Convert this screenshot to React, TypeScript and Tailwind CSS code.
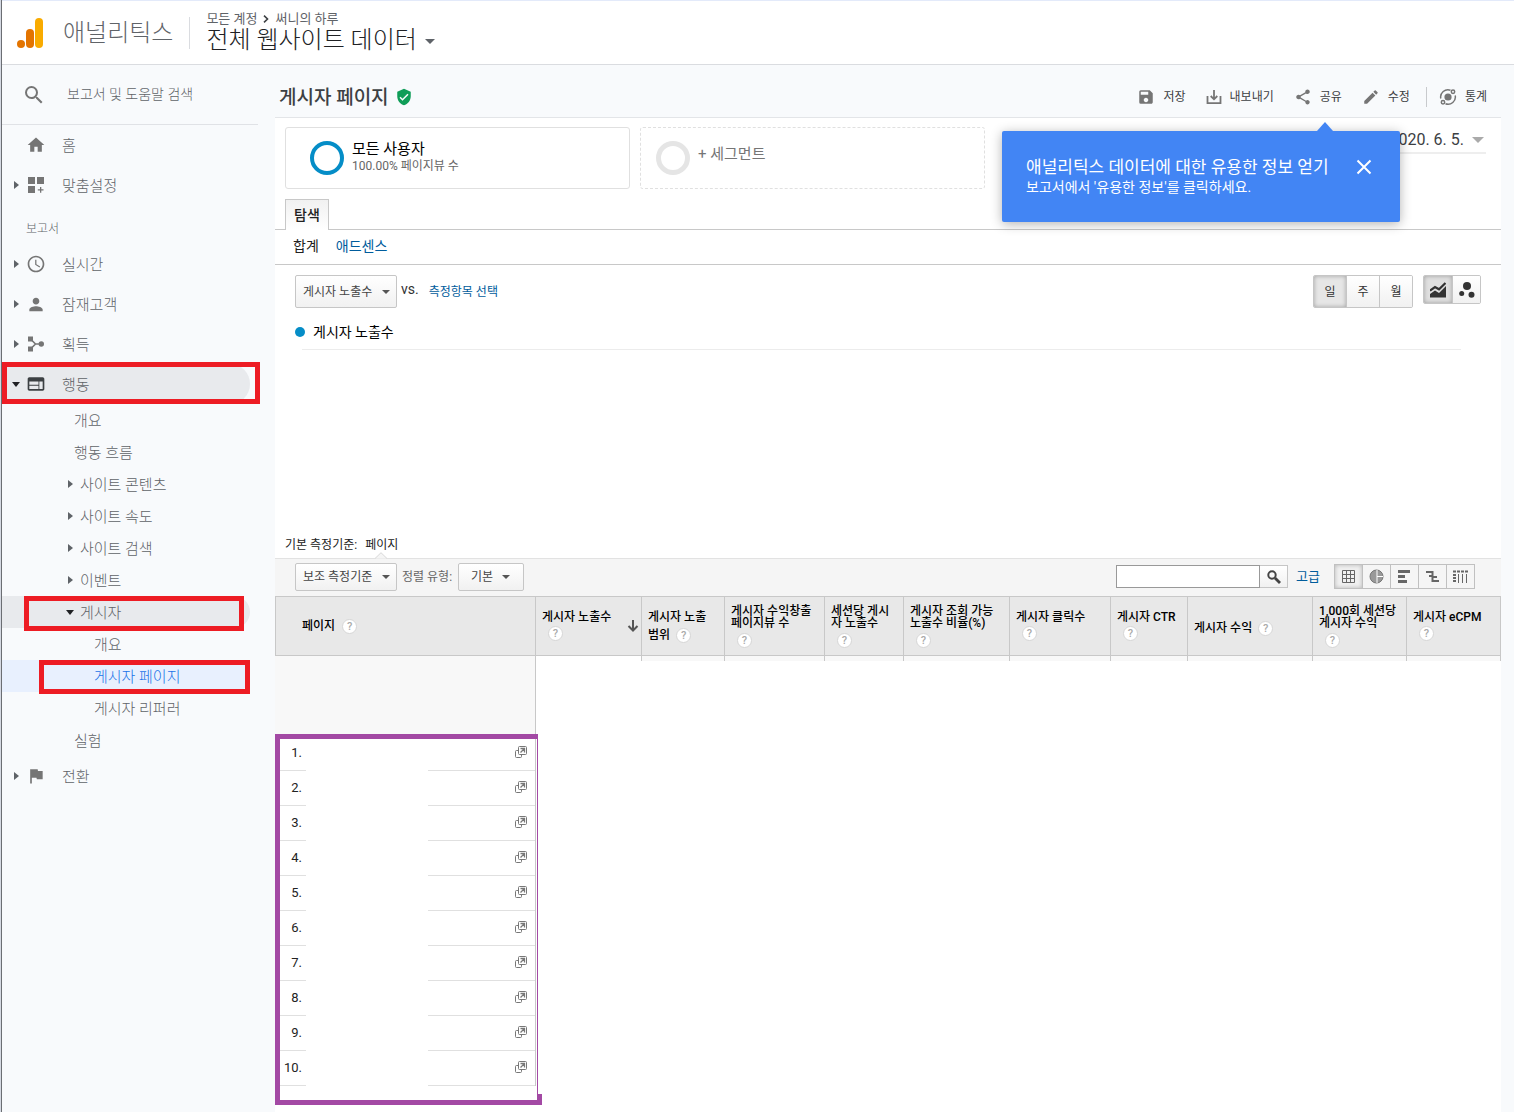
import type { ReactNode } from 'react'
import clsx from 'clsx'
import {
  MdAccessTime,
  MdEdit,
  MdFlag,
  MdHome,
  MdPerson,
  MdSave,
  MdSearch,
  MdShare,
  MdVerifiedUser,
  MdWeb
} from 'react-icons/md'

interface NavEntry {
  label: string
  icon?: ReactNode
  level: 0 | 1 | 2
  arrow?: 'right' | 'down'
  state?: 'open' | 'current'
  mark?: string
}

const TOP_NAV: NavEntry[] = [
  { label: '홈', icon: <MdHome size={20} />, level: 0 },
  { label: '맞춤설정', icon: <CustomIcon />, level: 0, arrow: 'right' }
]

const REPORT_NAV: NavEntry[] = [
  { label: '실시간', icon: <MdAccessTime size={20} />, level: 0, arrow: 'right' },
  { label: '잠재고객', icon: <MdPerson size={21} />, level: 0, arrow: 'right' },
  { label: '획득', icon: <AcquireIcon />, level: 0, arrow: 'right' },
  {
    label: '행동',
    icon: <MdWeb size={20} className="text-[#3c4043]" />,
    level: 0,
    arrow: 'down',
    state: 'open',
    mark: 'left-0 -top-0.5 w-[258px] h-[42px]'
  },
  { label: '개요', level: 1 },
  { label: '행동 흐름', level: 1 },
  { label: '사이트 콘텐츠', level: 1, arrow: 'right' },
  { label: '사이트 속도', level: 1, arrow: 'right' },
  { label: '사이트 검색', level: 1, arrow: 'right' },
  { label: '이벤트', level: 1, arrow: 'right' },
  {
    label: '게시자',
    level: 1,
    arrow: 'down',
    state: 'open',
    mark: 'left-[22px] top-0 w-[220px] h-[35px]'
  },
  { label: '개요', level: 2 },
  {
    label: '게시자 페이지',
    level: 2,
    state: 'current',
    mark: 'left-[37px] top-0 w-[211px] h-[34px]'
  },
  { label: '게시자 리퍼러', level: 2 },
  { label: '실험', level: 1 },
  { label: '전환', icon: <MdFlag size={20} />, level: 0, arrow: 'right' }
]

interface Column {
  lines: string[]
  width: string
  layout: 'one' | 'two' | 'inline' | 'wrap'
  sorted?: boolean
}

const COLUMNS: Column[] = [
  { lines: ['게시자 노출수'], width: 'w-[106px]', layout: 'one', sorted: true },
  { lines: ['게시자 노출', '범위'], width: 'w-[83px]', layout: 'wrap' },
  { lines: ['게시자 수익창출', '페이지뷰 수'], width: 'w-[100px]', layout: 'two' },
  { lines: ['세션당 게시', '자 노출수'], width: 'w-[79px]', layout: 'two' },
  { lines: ['게시자 조회 가능', '노출수 비율(%)'], width: 'w-[106px]', layout: 'two' },
  { lines: ['게시자 클릭수'], width: 'w-[101px]', layout: 'one' },
  { lines: ['게시자 CTR'], width: 'w-[77px]', layout: 'one' },
  { lines: ['게시자 수익'], width: 'w-[125px]', layout: 'inline' },
  { lines: ['1,000회 세션당', '게시자 수익'], width: 'w-[94px]', layout: 'two' },
  { lines: ['게시자 eCPM'], width: 'w-[94px]', layout: 'one' }
]

const ROWS = Array.from({ length: 10 }, (_, i) => i + 1)

export default function App(): React.JSX.Element {
  return (
    <div className="flex min-h-screen flex-col border-l border-[#d5d9e2] font-['Roboto','Noto_Sans_CJK_KR',sans-serif] text-black">
      <div className="flex flex-1 flex-col border-l border-[#6b6e73] bg-[#f8fafc]">
        <Header />
        <div className="flex flex-1">
          <Sidebar />
          <main className="mr-[13px] flex min-w-0 flex-1 flex-col">
            <TitleBar />
            <div className="flex-1 bg-white">
              <Segments />
              <Explorer />
              <DataTable />
            </div>
          </main>
        </div>
      </div>
    </div>
  )
}

// ── Header ────────────────────────────────────────────────────

function Header(): React.JSX.Element {
  return (
    <header className="flex h-[65px] items-center border-b border-t border-b-[#dadce0] border-t-[#e3eafa] bg-white pl-[15px]">
      <svg width="26" height="30" viewBox="0 0 26 30" className="shrink-0">
        <circle cx="4" cy="26" r="4" fill="#e37400" />
        <rect x="9" y="11" width="8" height="19" rx="4" fill="#e37400" />
        <rect x="18" y="0" width="8" height="30" rx="4" fill="#f9ab00" />
      </svg>
      <span className="ml-5 text-2xl font-light text-[#5f6368]">애널리틱스</span>
      <div className="mx-4 h-8 w-px bg-[#dadce0]" />
      <div className="flex flex-col pb-0.5">
        <div className="flex items-center text-[13px] leading-4 text-[#5f6368]">
          모든 계정
          <svg
            width="6"
            height="8"
            viewBox="0 0 6 8"
            className="mx-1.5"
            fill="none"
            stroke="#3c4043"
            strokeWidth="1.6"
          >
            <path d="M1 .7 4.5 4 1 7.3" />
          </svg>
          써니의 하루
        </div>
        <button className="flex items-center gap-2 text-2xl leading-[26px] font-light text-[#202124]">
          전체 웹사이트 데이터
          <svg width="10" height="5" viewBox="0 0 10 5" className="mt-1">
            <path d="M0 0h10L5 5z" fill="#5f6368" />
          </svg>
        </button>
      </div>
    </header>
  )
}

// ── Sidebar ───────────────────────────────────────────────────

function Sidebar(): React.JSX.Element {
  return (
    <aside className="w-[273px] shrink-0">
      <label className="mr-[17px] flex h-[60px] items-center border-b border-[#e0e2e6] pl-5 text-[#757575]">
        <MdSearch size={24} className="shrink-0" />
        <input
          aria-label="보고서 및 도움말 검색"
          placeholder="보고서 및 도움말 검색"
          className="ml-[21px] w-40 bg-transparent pb-0.5 text-sm font-light outline-none placeholder:text-[#5f6368]"
        />
      </label>
      <nav>
        {TOP_NAV.map((entry) => (
          <NavItem key={entry.label} entry={entry} />
        ))}
        <p className="flex h-[39px] items-center pl-6 pt-2 text-xs font-light text-[#5f6368]">보고서</p>
        {REPORT_NAV.map((entry, i) => (
          <NavItem key={i} entry={entry} />
        ))}
      </nav>
    </aside>
  )
}

function NavItem({ entry }: { entry: NavEntry }): React.JSX.Element {
  const { label, icon, level, arrow, state, mark } = entry
  const rowClass = clsx(
    'flex w-[248px] items-center rounded-r-full text-left text-[15px] font-light',
    level === 0 ? 'h-10 pl-2.5' : 'h-8',
    level === 1 && (arrow ? 'pl-16' : 'pl-[72px]'),
    level === 2 && 'pl-[92px]',
    state === 'open' && 'bg-[#e8eaed]',
    state === 'current' ? 'bg-[#e8f0fe] text-[#1a73e8]' : 'text-[#5f6368]'
  )
  const content = (
    <>
      {(level === 0 || arrow) && (
        <span className="flex w-2 shrink-0 justify-center">{arrow && <NavArrow dir={arrow} />}</span>
      )}
      {level === 0 && (
        <span className="ml-1.5 mr-4 flex size-5 shrink-0 items-center justify-center text-[#757575]">
          {icon}
        </span>
      )}
      <span className={clsx('pt-0.5', arrow && level === 1 && 'ml-1.5')}>{label}</span>
    </>
  )

  return (
    <div className="relative">
      {arrow ? (
        <button className={rowClass}>{content}</button>
      ) : (
        <a href="#" className={rowClass}>
          {content}
        </a>
      )}
      {mark && <div className={clsx('pointer-events-none absolute border-5 border-[#ed1c24]', mark)} />}
    </div>
  )
}

function NavArrow({ dir }: { dir: 'right' | 'down' }): React.JSX.Element {
  return dir === 'right' ? (
    <svg width="5" height="8" viewBox="0 0 5 8" className="shrink-0">
      <path d="M0 0v8l5-4z" fill="#5f6368" />
    </svg>
  ) : (
    <svg width="8" height="5" viewBox="0 0 8 5" className="shrink-0">
      <path d="M0 0h8L4 5z" fill="#202124" />
    </svg>
  )
}

// ── Title bar ─────────────────────────────────────────────────

function TitleBar(): React.JSX.Element {
  return (
    <div className="flex h-[53px] items-center border-b border-[#e3e5e8] pl-1 pr-3.5 pt-3">
      <h1 className="pt-0.5 text-[19px] font-medium text-[#3c4043]">게시자 페이지</h1>
      <MdVerifiedUser size={18} className="ml-1.5 text-[#0f9d58]" />
      <div className="ml-auto flex items-center gap-5 text-xs text-[#3c4043]">
        <ToolButton label="저장" icon={<MdSave size={18} />} />
        <ToolButton label="내보내기" icon={<ExportIcon />} />
        <ToolButton label="공유" icon={<MdShare size={18} />} />
        <ToolButton label="수정" icon={<MdEdit size={18} />} />
        <div className="-ml-1 -mr-2 h-5 w-px bg-[#c8cacd]" />
        <ToolButton label="통계" icon={<InsightIcon />} />
      </div>
    </div>
  )
}

function ToolButton({ label, icon }: { label: string; icon: ReactNode }): React.JSX.Element {
  return (
    <button className="flex items-center gap-2">
      <span className="text-[#757575]">{icon}</span>
      {label}
    </button>
  )
}

// ── Segments, date and tooltip ────────────────────────────────

function Segments(): React.JSX.Element {
  return (
    <section className="relative flex items-start gap-2.5 px-2.5 pt-[9px]">
      <div className="flex h-[62px] w-[345px] items-center rounded-[3px] border border-[#e0e0e0] pl-6">
        <div className="size-[34px] rounded-full border-4 border-[#058dc7]" />
        <div className="ml-2 pb-1">
          <p className="text-[15px] leading-5">모든 사용자</p>
          <p className="text-xs leading-3.5 text-[#666]">100.00% 페이지뷰 수</p>
        </div>
      </div>
      <button className="flex h-[62px] w-[345px] items-center rounded-[3px] border border-dashed border-[#e0e0e0] pl-[15px] text-[15px] text-[#757575]">
        <span className="size-[34px] rounded-full border-5 border-[#e5e5e5]" />
        <span className="ml-2 pb-2">+ 세그먼트</span>
      </button>
      <button className="ml-auto mr-[5px] flex h-[27px] items-center gap-2 border-b-2 border-[#eee] pr-0.5 text-[#3c4043]">
        2020. 6. 5.
        <svg width="12" height="6" viewBox="0 0 12 6">
          <path d="M0 0h12L6 6z" fill="#aaa" />
        </svg>
      </button>

      <div
        role="tooltip"
        className="absolute right-[101px] top-[13px] z-10 flex h-[91px] w-[398px] items-start rounded-[2px] bg-[#4285f4] pl-6 pt-6 text-white shadow-[0_2px_12px_rgba(0,0,0,0.3)]"
      >
        <svg width="16" height="9" viewBox="0 0 16 9" className="absolute -top-[9px] right-[67px]">
          <path d="M0 9 8 0l8 9z" fill="#4285f4" />
        </svg>
        <div>
          <p className="text-[17px] leading-6">애널리틱스 데이터에 대한 유용한 정보 얻기</p>
          <p className="text-sm leading-4">보고서에서 '유용한 정보'를 클릭하세요.</p>
        </div>
        <button aria-label="닫기" className="absolute right-7 top-7">
          <svg width="16" height="16" viewBox="0 0 16 16" stroke="currentColor" strokeWidth="2">
            <path d="m1.500 1.500 13 13m0-13-13 13" />
          </svg>
        </button>
      </div>
    </section>
  )
}

// ── Explorer ──────────────────────────────────────────────────

function Explorer(): React.JSX.Element {
  return (
    <section>
      <div className="mt-2.5 flex border-b border-[#c8c8c8] pl-2.5">
        <button className="-mb-px h-[31px] w-11 border border-b-0 border-[#c8c8c8] bg-linear-to-b from-[#f1f1f1] to-white text-sm font-medium text-[#222]">
          탐색
        </button>
      </div>
      <div className="flex h-[35px] items-center gap-[17px] border-b border-[#c8c8c8] pb-0.5 pl-[18px] text-sm">
        <span className="text-[#222]">합계</span>
        <a href="#" className="text-[#005c9c]">
          애드센스
        </a>
      </div>

      <div className="flex items-start px-5 pt-2.5">
        <Dropdown label="게시자 노출수" className="h-[33px] w-[102px]" />
        <span className="ml-1 mt-1 text-sm text-[#333]">vs.</span>
        <a href="#" className="ml-2.5 mt-2 text-xs leading-[18px] text-[#005c9c]">
          측정항목 선택
        </a>
        <div className="ml-auto flex h-[33px] overflow-hidden rounded-[2px] border border-[#c6c6c6] text-xs text-[#333]">
          {['일', '주', '월'].map((unit, i) => (
            <button
              key={unit}
              className={clsx(
                i === 0
                  ? 'w-8 bg-[#e6e6e6] shadow-[inset_0_0_4px_rgba(0,0,0,0.3)]'
                  : 'w-[33px] border-l border-[#c6c6c6] bg-linear-to-b from-white to-[#f1f1f1]'
              )}
            >
              {unit}
            </button>
          ))}
        </div>
        <div className="ml-2.5 flex h-[29px] overflow-hidden rounded-[2px] border border-[#c6c6c6] text-[#333]">
          <button
            aria-label="선 차트"
            className="flex w-7 items-center justify-center bg-[#e0e0e0] shadow-[inset_0_0_4px_rgba(0,0,0,0.3)]"
          >
            <svg width="16" height="16" viewBox="0 0 16 16">
              <path d="M0 12 5 8.500l4 2.500 7-7v11.500H0z" fill="currentColor" />
              <path d="M0 8.700 5 5l4 2.300L15.500 1" fill="none" stroke="currentColor" strokeWidth="2.200" />
            </svg>
          </button>
          <button
            aria-label="모션 차트"
            className="flex w-7 items-center justify-center border-l border-[#c6c6c6] bg-linear-to-b from-white to-[#f1f1f1]"
          >
            <svg width="16" height="16" viewBox="0 0 16 16" fill="currentColor">
              <circle cx="8" cy="4" r="4" />
              <circle cx="2.700" cy="11.500" r="2.500" />
              <circle cx="12.500" cy="12.700" r="3" />
            </svg>
          </button>
        </div>
      </div>

      <div className="ml-5 mt-3.5 flex items-center gap-2 text-sm leading-5">
        <span className="size-2.5 rounded-full bg-[#058dc7]" />
        게시자 노출수
      </div>
      <div className="ml-[27px] mr-10 mt-[7px] h-[188px] border-t border-[#ececec]" />

      <div className="flex h-[21px] items-start gap-2 pl-2.5 text-xs text-[#222]">
        <span>기본 측정기준:</span>
        <span className="relative h-full">
          페이지
          <svg width="12" height="7" viewBox="0 0 12 7" className="absolute -bottom-px left-2.5">
            <path d="M0 6.500 6 .700l6 5.800" fill="#f5f5f5" stroke="#d8d8d8" />
          </svg>
        </span>
      </div>
      <div className="flex h-[38px] items-center border-t border-[#e2e2e2] bg-[#f5f5f5] pb-0.5 pl-5 pr-[26px]">
        <Dropdown label="보조 측정기준" className="h-7 w-[102px]" />
        <span className="ml-[5px] text-xs text-[#666]">정렬 유형:</span>
        <Dropdown label="기본" className="ml-1.5 h-7 w-[66px]" roomy />
        <form className="ml-auto flex h-[23px]">
          <input aria-label="검색" className="w-36 border border-[#999] bg-white px-1 text-xs outline-none" />
          <button
            type="button"
            aria-label="검색 실행"
            className="flex w-7 items-center justify-center border border-l-0 border-[#c6c6c6] bg-linear-to-b from-white to-[#f1f1f1] text-[#444]"
          >
            <svg width="14" height="14" viewBox="0 0 14 14" fill="none" stroke="currentColor">
              <circle cx="5" cy="5" r="3.700" strokeWidth="2" />
              <path d="m8 8 5 5" strokeWidth="2.800" />
            </svg>
          </button>
        </form>
        <a href="#" className="ml-2 text-[13px] text-[#005c9c]">
          고급
        </a>
        <ViewSwitch />
      </div>
    </section>
  )
}

function Dropdown({
  label,
  className,
  roomy
}: {
  label: string
  className: string
  roomy?: boolean
}): React.JSX.Element {
  return (
    <div className={clsx('relative', className)}>
      <select
        aria-label={label}
        className={clsx(
          'size-full appearance-none rounded-[2px] border border-[#c6c6c6] bg-linear-to-b from-white to-[#f1f1f1] text-xs text-[#444] outline-none',
          roomy ? 'pl-3' : 'pl-[7px]'
        )}
      >
        <option>{label}</option>
      </select>
      <svg
        width="8"
        height="4"
        viewBox="0 0 8 4"
        className={clsx('pointer-events-none absolute top-1/2 -mt-0.5', roomy ? 'right-3.5' : 'right-[7px]')}
      >
        <path d="M0 0h8L4 4z" fill="#555" />
      </svg>
    </div>
  )
}

function ViewSwitch(): React.JSX.Element {
  const views: { name: string; icon: ReactNode }[] = [
    {
      name: '표',
      icon: (
        <path
          d="M1.500 1.500h12v12h-12zM5.500 1v13M9.500 1v13M1 5.500h13M1 9.500h13"
          fill="none"
          stroke="currentColor"
        />
      )
    },
    {
      name: '비율',
      icon: (
        <>
          <circle cx="7.500" cy="7.500" r="6.500" fill="#999" stroke="#777" />
          <path d="M8 1v13M8 7.500h6" stroke="#fff" />
        </>
      )
    },
    {
      name: '실적',
      icon: <path d="M1 1h12v3H1zM1 6h7v3H1zM1 11h9v3H1z" fill="currentColor" />
    },
    {
      name: '비교',
      icon: (
        <path
          d="M1 3h7M4 7h3M7 12h7M7.500 2v11M7.500 8H12"
          fill="none"
          stroke="currentColor"
          strokeWidth="2"
        />
      )
    },
    {
      name: '피봇',
      icon: (
        <>
          <path d="M0 2.500h15" stroke="currentColor" strokeWidth="2" strokeDasharray="3 1" />
          <path d="M1.500 5v9" stroke="currentColor" strokeWidth="3" strokeDasharray="2 1" />
          <path d="M5.500 5v9M9.500 5v9M13.500 5v9" stroke="currentColor" />
        </>
      )
    }
  ]
  return (
    <div className="ml-3.5 flex h-[25px] border border-[#c0c0c0] text-[#666]">
      {views.map((view, i) => (
        <button
          key={view.name}
          aria-label={view.name}
          className={clsx(
            'flex items-center justify-center',
            i === 0
              ? 'w-[27px] bg-[#f0f0f0] shadow-[inset_0_0_4px_rgba(0,0,0,0.25)]'
              : 'w-7 border-l border-[#c0c0c0]'
          )}
        >
          <svg width="15" height="15" viewBox="0 0 15 15">
            {view.icon}
          </svg>
        </button>
      ))}
    </div>
  )
}

// ── Table ─────────────────────────────────────────────────────

function DataTable(): React.JSX.Element {
  return (
    <div className="relative">
      <table className="w-full table-fixed border-separate border-spacing-0 text-xs">
        <thead>
          <tr className="h-[60px] bg-[#e8e8e8] text-left">
            <th className="w-[261px] border border-[#c8c8c8] px-[26px] font-medium">
              <span className="flex items-center gap-[7px]">
                페이지 <HelpBadge />
              </span>
            </th>
            {COLUMNS.map((col) => (
              <HeadCell key={col.lines.join()} col={col} />
            ))}
          </tr>
        </thead>
        <tbody>
          <tr className="h-20">
            <td className="border-r border-[#c8c8c8] bg-[#f8f8f8]" />
            {COLUMNS.map((col, i) => (
              <td key={col.lines.join()} className="p-0 align-top">
                <div className={clsx('h-[5px] border-r border-[#c8c8c8]', i > 0 && 'bg-[#f8f8f8]')} />
              </td>
            ))}
          </tr>
          {ROWS.map((n) => (
            <tr key={n}>
              <td className="border-r border-[#c8c8c8] p-0">
                <div className="flex h-[35px]">
                  <span className="w-[31px] border-b border-[#e0e0e0] pr-1 text-right text-[13px] leading-[34px] text-[#222]">
                    {n}.
                  </span>
                  <span className="w-[122px]" />
                  <span className="flex flex-1 items-center justify-end border-b border-[#e0e0e0] pb-0.5 pr-2">
                    <a href="#" aria-label={`${n}번 페이지 열기`}>
                      <OpenIcon />
                    </a>
                  </span>
                </div>
              </td>
              <td colSpan={COLUMNS.length} />
            </tr>
          ))}
        </tbody>
      </table>
      <div className="h-5" />
      <div className="pointer-events-none absolute left-0 top-[138px] h-[371px] w-[263px] border-5 border-r border-[#a349a4]">
        <div className="absolute -bottom-[5px] -right-[5px] h-[11px] w-[5px] bg-[#a349a4]" />
      </div>
    </div>
  )
}

function HeadCell({ col }: { col: Column }): React.JSX.Element {
  const { lines, width, layout, sorted } = col
  return (
    <th className={clsx('border-y border-r border-[#c8c8c8] px-1.5 py-0 font-medium whitespace-nowrap', width)}>
      <div className={clsx('flex items-center justify-between', sorted && '-mr-1')}>
        <div
          className={clsx(
            layout === 'two' ? 'leading-3' : 'leading-[18px]',
            layout === 'one' && 'pb-[3px]',
            layout === 'inline' && 'pt-1'
          )}
        >
          {layout === 'inline' && (
            <span className="flex items-center gap-1.5">
              {lines[0]} <HelpBadge />
            </span>
          )}
          {layout === 'wrap' && (
            <>
              {lines[0]}
              <span className="flex items-center gap-1.5">
                {lines[1]} <HelpBadge />
              </span>
            </>
          )}
          {(layout === 'one' || layout === 'two') && (
            <>
              {lines.map((line) => (
                <div key={line}>{line}</div>
              ))}
              <HelpBadge className={clsx('ml-1.5', layout === 'two' && 'mt-1')} />
            </>
          )}
        </div>
        {sorted && (
          <svg width="12" height="12" viewBox="0 0 12 12" fill="none" stroke="#555" strokeWidth="2">
            <path d="M6 0v10M1.500 6 6 10.500 10.500 6" />
          </svg>
        )}
      </div>
    </th>
  )
}

function HelpBadge({ className }: { className?: string }): React.JSX.Element {
  return (
    <span
      className={clsx(
        'flex size-[15px] shrink-0 items-center justify-center rounded-full border border-[#d6d6d6] bg-white text-[11px] leading-none font-medium text-[#aaa]',
        className
      )}
    >
      ?
    </span>
  )
}

// ── Icons ─────────────────────────────────────────────────────

function CustomIcon(): React.JSX.Element {
  return (
    <svg width="16" height="16" viewBox="0 0 16 16" fill="currentColor">
      <path d="M0 0h7v7H0zM9 0h7v7H9zM0 9h7v7H0zM12 10h1.300v2.200h2.200v1.300h-2.200v2.200H12v-2.200H9.800v-1.300H12z" />
    </svg>
  )
}

function AcquireIcon(): React.JSX.Element {
  return (
    <svg width="16" height="16" viewBox="0 0 16 16" fill="currentColor">
      <path d="M0 .500h5v5H0zM0 10.500h5v5H0z" />
      <path d="m2.500 3 5 5-5 5M7.500 8H14" fill="none" stroke="currentColor" strokeWidth="1.600" />
      <circle cx="13.300" cy="8" r="2.700" />
    </svg>
  )
}

function ExportIcon(): React.JSX.Element {
  return (
    <svg width="16" height="16" viewBox="0 0 16 16" fill="none" stroke="currentColor" strokeWidth="1.800">
      <path d="M1.500 7v7.200h13V7" />
      <path d="M8 1v9M4.700 7 8 10.300 11.300 7" />
    </svg>
  )
}

function InsightIcon(): React.JSX.Element {
  return (
    <svg width="18" height="18" viewBox="0 0 18 18" fill="none" stroke="currentColor" strokeWidth="1.500">
      <circle cx="9" cy="9" r="3.600" fill="currentColor" stroke="none" />
      <path d="M1.800 10.500A7.300 7.300 0 0 1 11.500 2.200M16.200 7.500a7.300 7.300 0 0 1-9.700 8.300" />
      <circle cx="14" cy="3.800" r="1.700" />
      <circle cx="4" cy="14.200" r="1.700" />
    </svg>
  )
}

function OpenIcon(): React.JSX.Element {
  return (
    <svg width="12" height="12" viewBox="0 0 12 12" fill="none" stroke="#777">
      <rect x="3.500" y=".500" width="8" height="8" rx="1" />
      <path d="M3.500 4.500h-2a1 1 0 0 0-1 1v5a1 1 0 0 0 1 1h4a1 1 0 0 0 1-1v-2" />
      <path d="M5.500 2.500h4v4M9 3 5.500 6.500" strokeWidth="1.300" />
    </svg>
  )
}
